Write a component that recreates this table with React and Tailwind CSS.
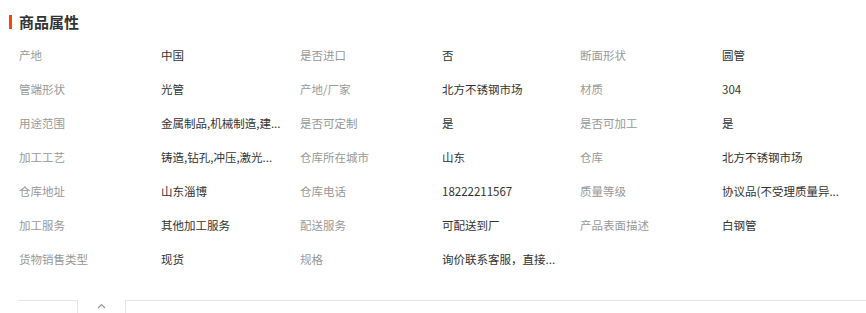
import React from 'react';

const rows = [
  ['产地', '中国', '是否进口', '否', '断面形状', '圆管'],
  ['管端形状', '光管', '产地/厂家', '北方不锈钢市场', '材质', '304'],
  ['用途范围', '金属制品,机械制造,建...', '是否可定制', '是', '是否可加工', '是'],
  ['加工工艺', '铸造,钻孔,冲压,激光...', '仓库所在城市', '山东', '仓库', '北方不锈钢市场'],
  ['仓库地址', '山东淄博', '仓库电话', '18222211567', '质量等级', '协议品(不受理质量异...'],
  ['加工服务', '其他加工服务', '配送服务', '可配送到厂', '产品表面描述', '白钢管'],
  ['货物销售类型', '现货', '规格', '询价联系客服，直接...'],
];

export default function App(){
  return (
    <div className="w-[866px] h-[313px] bg-white overflow-hidden font-['Noto_Sans_CJK_SC',sans-serif]">
      <div className="flex items-center ml-[9px] mt-[14px] h-[15px]">
        <div className="w-[3px] h-[14px] bg-[#ff4400]" />
        <div className="ml-[7px] text-[15px] leading-[15px] font-bold text-[#333]">商品属性</div>
      </div>
      <div className="mt-[10px] ml-[19px] grid grid-cols-[142px_139px_142px_138px_142px_1fr] text-[11.5px]">
        {rows.map((r, i) => r.map((c, j) => (
          <div key={i + '-' + j} className={`h-[34px] flex items-center whitespace-nowrap ${j % 2 === 0 ? 'text-[#999]' : 'text-[#333]'}`}>{c}</div>
        )))}
      </div>
      <div className="flex ml-[18px] mt-[23px]">
        <div className="w-[59px] border-t border-[#e5e5e5]" />
        <div className="w-[49px] h-[16px] border-x border-[#e5e5e5] flex justify-center pt-[3px]">
          <svg width="9" height="6" viewBox="0 0 9 6" fill="none" stroke="#999" strokeWidth="1.2">
            <path d="M1 5 L4.5 1.5 L8 5" />
          </svg>
        </div>
        <div className="flex-1 border-t border-[#e5e5e5]" />
      </div>
    </div>
  );
}
